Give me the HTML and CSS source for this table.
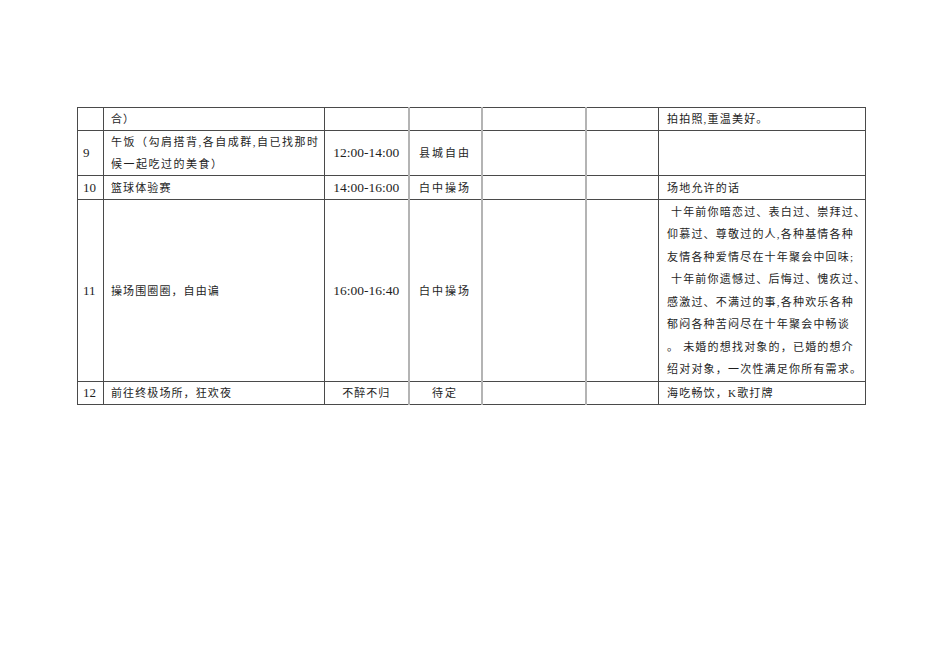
FILE: index.html
```html
<!DOCTYPE html>
<html lang="zh-CN">
<head>
<meta charset="utf-8">
<title>十年聚会安排</title>
<link rel="stylesheet" href="styles.css">
</head>
<body>
<div class="page">
  <table class="plan">
    <colgroup>
      <col class="c-no">
      <col class="c-item">
      <col class="c-time">
      <col class="c-place">
      <col class="c-e1">
      <col class="c-e2">
      <col class="c-note">
    </colgroup>
    <tr class="r1">
      <td class="no"></td>
      <td class="item">合）</td>
      <td class="time"></td>
      <td class="place g"></td>
      <td class="g"></td>
      <td class="g"></td>
      <td class="note">拍拍照,重温美好。</td>
    </tr>
    <tr class="r2">
      <td class="no">9</td>
      <td class="item wide">午饭（勾肩搭背,各自成群,自已找那时<br>候一起吃过的美食）</td>
      <td class="time">12:00-14:00</td>
      <td class="place g">县城自由</td>
      <td class="g"></td>
      <td class="g"></td>
      <td class="note"></td>
    </tr>
    <tr class="r3">
      <td class="no">10</td>
      <td class="item">篮球体验赛</td>
      <td class="time">14:00-16:00</td>
      <td class="place g">白中操场</td>
      <td class="g"></td>
      <td class="g"></td>
      <td class="note">场地允许的话</td>
    </tr>
    <tr class="r4">
      <td class="no">11</td>
      <td class="item">操场围圈圈，自由谝</td>
      <td class="time">16:00-16:40</td>
      <td class="place g">白中操场</td>
      <td class="g"></td>
      <td class="g"></td>
      <td class="note long">&nbsp;十年前你暗恋过、表白过、崇拜过、<br>仰慕过、尊敬过的人,各种基情各种<br>友情各种爱情尽在十年聚会中回味;<br>&nbsp;十年前你遗憾过、后悔过、愧疚过、<br>感激过、不满过的事,各种欢乐各种<br>郁闷各种苦闷尽在十年聚会中畅谈<br>。 未婚的想找对象的，已婚的想介<br>绍对对象，一次性满足你所有需求。</td>
    </tr>
    <tr class="r5">
      <td class="no">12</td>
      <td class="item">前往终极场所，狂欢夜</td>
      <td class="time cjk">不醉不归</td>
      <td class="place g">待定</td>
      <td class="g"></td>
      <td class="g"></td>
      <td class="note">海吃畅饮，K歌打牌</td>
    </tr>
  </table>
</div>
</body>
</html>
```

FILE: styles.css
```css
html, body {
  margin: 0;
  padding: 0;
  background: #ffffff;
}

.page {
  padding: 107px 0 0 77px;
  width: 950px;
  height: 672px;
  box-sizing: border-box;
}

.plan {
  border-collapse: collapse;
  table-layout: fixed;
  width: 788px;
  font-family: "Liberation Serif", "Noto Sans CJK SC", serif;
  font-size: 11px;
  color: #1e1e1e;
}

.c-no { width: 26px; }
.c-item { width: 221px; }
.c-time { width: 84px; }
.c-place { width: 73px; }
.c-e1 { width: 104px; }
.c-e2 { width: 73px; }
.c-note { width: 207px; }

.plan td {
  border: 1px solid #4a4a4a;
  padding: 0 0 0 6px;
  vertical-align: middle;
  line-height: 22px;
  letter-spacing: 1px;
  white-space: nowrap;
  overflow: visible;
}

.plan td.g {
  border-left: 2px solid #b4b4b4;
}

.r1 td { height: 22px; }
.r2 td { height: 43px; }
.r3 td { height: 23px; }
.r4 td { height: 181px; }
.r5 td { height: 22px; }

.plan td.no {
  font-size: 13px;
  letter-spacing: 0;
  padding-left: 5px;
}

.plan td.item {
  padding-left: 7px;
  letter-spacing: 1.1px;
}

.plan td.item.wide {
  letter-spacing: 1.5px;
}

.plan td.time {
  text-align: center;
  padding: 0;
  font-size: 13.5px;
  letter-spacing: 0;
}

.plan td.time.cjk {
  font-size: 11px;
  letter-spacing: 1px;
}

.plan td.place {
  text-align: center;
  padding: 0;
  letter-spacing: 2px;
}

.plan td.note {
  padding-left: 8px;
  letter-spacing: 1.2px;
}

.plan td.note.long {
  line-height: 22.5px;
}
```
